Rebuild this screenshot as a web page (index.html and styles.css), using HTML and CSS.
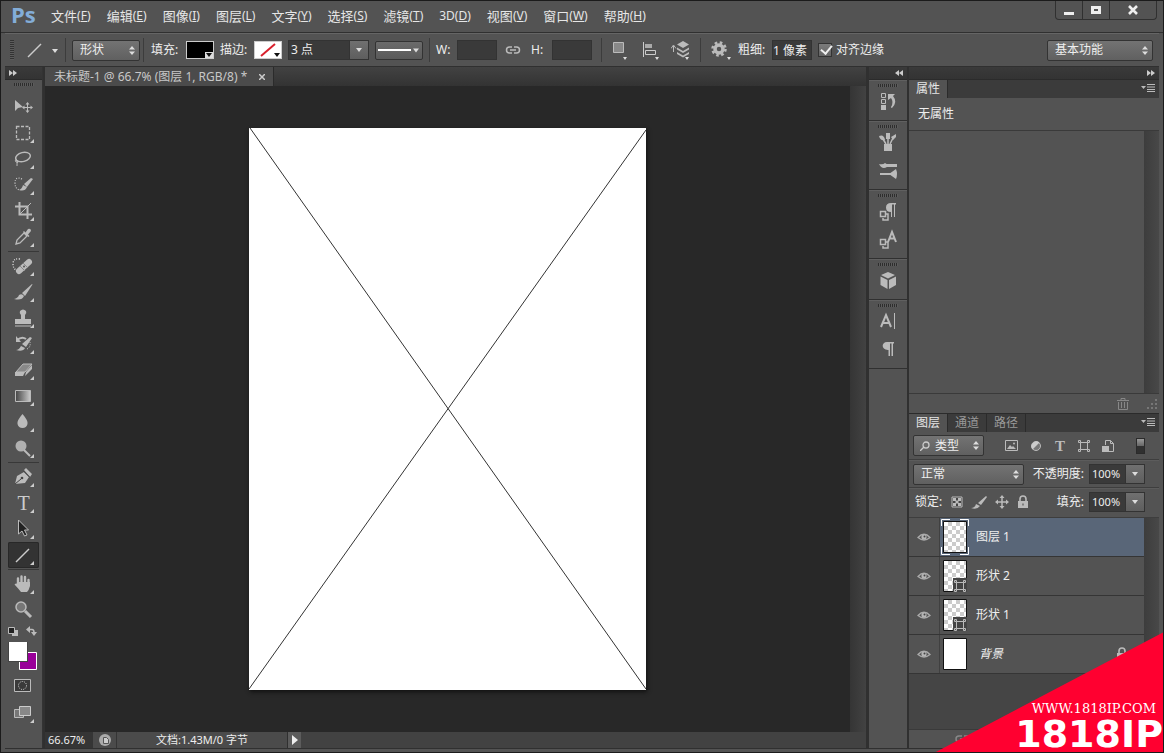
FILE: index.html
```html
<!DOCTYPE html>
<html lang="zh-CN">
<head>
<meta charset="utf-8">
<title>未标题-1 - Ps</title>
<link rel="stylesheet" href="styles.css">
</head>
<body>
<svg class="defs" aria-hidden="true">
  <defs>
    <linearGradient id="grad-tool"><stop offset="0" stop-color="#444"/><stop offset="1" stop-color="#ccc"/></linearGradient>
    <pattern id="checker" width="8" height="8" patternUnits="userSpaceOnUse"><path fill="#fff" d="M0 0h8v8H0z"/><path fill="#ccc" d="M4 0h4v4H4zM0 4h4v4H0z"/></pattern>
    <symbol id="caret" viewBox="0 0 6 4"><path d="M0 0h6L3 4z" fill="#ddd"/></symbol>
    <symbol id="updown" viewBox="0 0 6 9"><path d="M3 0l3 3.500H0zM3 9l3-3.500H0z" fill="#ddd"/></symbol>
    <symbol id="panel-menu" viewBox="0 0 14 8"><path d="M0 2h5L2.500 5z" fill="#bbb"/><path d="M6 .5h8M6 3h8M6 5.500h8M6 7.500h8" stroke="#bbb"/></symbol>
    <symbol id="eye" viewBox="0 0 14 10"><path d="M1 5.500Q7-1 13 5.500Q7 10.500 1 5.500z" fill="none" stroke="#aaa" stroke-width="1.300"/><circle cx="7" cy="5" r="2.600" fill="#b5b5b5"/><circle cx="7.500" cy="4.500" r="1" fill="#444"/></symbol>
    <symbol id="bounds" viewBox="0 0 14 14"><path d="M3 3.500h8M3 10.500h8M3.500 3v8M10.500 3v8" stroke="#bbb" fill="none"/><path d="M1.500 1.500h2v2h-2zM10.500 1.500h2v2h-2zM1.500 10.500h2v2h-2zM10.500 10.500h2v2h-2z" fill="#555" stroke="#bbb"/></symbol>
    <symbol id="lock" viewBox="0 0 12 14"><path d="M3 6V4a3 3 0 016 0v2" fill="none" stroke="#bbb" stroke-width="1.600"/><path d="M1 6h10v7H1z" fill="#bbb"/><path d="M5.500 8.500h1v2h-1z" fill="#444"/></symbol>
    <symbol id="pilcrow" viewBox="0 0 12 14"><path d="M12 0v1.500h-1V14H9.500V1.500H8V14H6.500V8C-1 8.500-1 0 5 0z" fill="#bbb"/></symbol>
  </defs>
</svg>
<div class="app">
  <header class="titlebar">
    <div class="logo">Ps</div>
    <nav class="menu">
      <button>文件<span>(<u>F</u>)</span></button>
      <button>编辑<span>(<u>E</u>)</span></button>
      <button>图像<span>(<u>I</u>)</span></button>
      <button>图层<span>(<u>L</u>)</span></button>
      <button>文字<span>(<u>Y</u>)</span></button>
      <button>选择<span>(<u>S</u>)</span></button>
      <button>滤镜<span>(<u>T</u>)</span></button>
      <button><span>3D(<u>D</u>)</span></button>
      <button>视图<span>(<u>V</u>)</span></button>
      <button>窗口<span>(<u>W</u>)</span></button>
      <button>帮助<span>(<u>H</u>)</span></button>
    </nav>
    <div class="window-buttons">
      <button aria-label="最小化"><svg width="12" height="10"><path d="M1 7h10v3H1z" fill="#eee"/></svg></button>
      <button aria-label="最大化"><svg width="12" height="10"><path d="M2.500 2.500h7v5h-7z" fill="none" stroke="#eee" stroke-width="3"/></svg></button>
      <button class="close" aria-label="关闭"><svg width="12" height="10"><path d="M2 1l8 8M10 1L2 9" stroke="#eee" stroke-width="2.600"/></svg></button>
    </div>
  </header>

  <div class="options">
    <span class="grip-v"></span>
    <button class="opt-icon tool-preset" aria-label="直线工具预设"><svg width="32" height="16"><path d="M1 15L14 2" stroke="#ccc" stroke-width="1.500"/><path d="M25 7h6l-3 4z" fill="#ddd"/></svg></button>
    <span class="sep"></span>
    <span class="select mode"><select aria-label="工具模式"><option>形状</option></select><svg width="6" height="9"><use href="#updown"/></svg></span>
    <span class="sep"></span>
    <span class="label fill-label">填充:</span>
    <button class="swatch" aria-label="填充"><svg width="26" height="16"><path d="M0 0h26v16H0z" fill="#000"/><path d="M18 10h8v6h-8z" fill="#ddd"/><path d="M19 11h6l-3 4z" fill="#111"/></svg></button>
    <span class="label">描边:</span>
    <button class="swatch" aria-label="描边"><svg width="26" height="16"><path d="M0 0h26v16H0z" fill="#fff"/><path d="M6 14L20 2" stroke="#d8202c" stroke-width="2"/><path d="M19 11h6l-3 4z" fill="#111"/></svg></button>
    <span class="combo stroke-width"><input type="text" value="3 点" aria-label="描边宽度"><button aria-label="选择宽度"><svg width="6" height="4"><use href="#caret"/></svg></button></span>
    <button class="line-style" aria-label="描边类型"><svg width="42" height="8"><path d="M0 4h33" stroke="#fff" stroke-width="2"/><path d="M35 2.500h6l-3 4z" fill="#ddd"/></svg></button>
    <span class="sep"></span>
    <label class="label short" for="w">W:</label><input class="field" id="w" type="text">
    <button class="opt-icon link" aria-label="链接"><svg width="16" height="10"><path d="M7 2H4.500a3 3 0 000 6H7M9 2h2.500a3 3 0 010 6H9M5 5h6" fill="none" stroke="#bbb" stroke-width="1.500"/></svg></button>
    <label class="label short" for="h">H:</label><input class="field" id="h" type="text">
    <span class="sep wide"></span>
    <button class="opt-icon" aria-label="路径操作"><svg width="20" height="20"><path d="M2.500 2.500h10v10h-10z" fill="#888" stroke="#bbb"/><path d="M12 17h4l-2 3z" fill="#ddd"/></svg></button>
    <button class="opt-icon" aria-label="路径对齐"><svg width="20" height="20"><path d="M2.500 2v15" stroke="#ccc"/><path d="M4 4h7v4H4z" fill="#aaa"/><path d="M4.500 10.500h10v4h-10z" fill="none" stroke="#ccc"/><path d="M14 17h4l-2 3z" fill="#ddd"/></svg></button>
    <button class="opt-icon" aria-label="路径排列"><svg width="20" height="20"><path d="M6 4.500l6-3.500 6 3.500-6 3.500zM6 7.500l6 3.500 6-3.500v2L12 13 6 9.500zM6 12l6 3.500 6-3.500v2l-6 3.500L6 14z" fill="#bbb"/><path d="M2.500 6v6M0 8.500L2.500 5 5 8.500" fill="none" stroke="#bbb"/><path d="M14 17h4l-2 3z" fill="#ddd"/></svg></button>
    <span class="sep wide"></span>
    <button class="opt-icon gear" aria-label="设置"><svg width="22" height="20"><circle cx="9" cy="9" r="4" fill="none" stroke="#bbb" stroke-width="3.500"/><circle cx="9" cy="9" r="6.500" fill="none" stroke="#bbb" stroke-width="2.500" stroke-dasharray="2.600 2.500"/><path d="M17 17h4l-2 3z" fill="#ddd"/></svg></button>
    <label class="label" for="weight">粗细:</label><input class="field" id="weight" type="text" value="1 像素">
    <label class="check"><input type="checkbox" checked>对齐边缘</label>
    <span class="select workspace-select"><select aria-label="工作区"><option>基本功能</option></select><svg width="6" height="9"><use href="#updown"/></svg></span>
  </div>

  <div class="workspace">
    <aside class="toolbox">
      <button class="strip" aria-label="展开工具"><svg width="8" height="6"><path d="M0 0l4 3-4 3zM4 0l4 3-4 3z" fill="#ccc"/></svg></button>
      <span class="grip"></span>
      <div class="tools">
        <button class="nosub" aria-label="移动"><svg viewBox="0 0 30 26"><path d="M7 6v11l3-3 5-1z" fill="#bbb"/><path d="M19.500 9v9M15 13.500h9" stroke="#bbb"/><path d="M17.500 10.500l2-2.500 2 2.500zM17.500 16.500l2 2.500 2-2.500zM16.500 11.500l-2.500 2 2.500 2zM22.500 11.500l2.500 2-2.500 2z" fill="#bbb"/></svg></button>
        <button aria-label="矩形选框"><svg viewBox="0 0 30 26"><path d="M8.500 6.500h13v13h-13z" fill="none" stroke="#bbb" stroke-width="1.300" stroke-dasharray="3 1.500"/></svg></button>
        <button aria-label="套索"><svg viewBox="0 0 30 26"><ellipse cx="15" cy="11" rx="7.500" ry="4.500" transform="rotate(-14 15 11)" fill="none" stroke="#bbb" stroke-width="1.500"/><path d="M9 13q-3 1-1 3 3 1 2-1t-1 5" fill="none" stroke="#bbb"/></svg></button>
        <button aria-label="快速选择"><svg viewBox="0 0 30 26"><path d="M14 7q-7-3-7 4 0 6 5 7" fill="none" stroke="#ccc" stroke-width="1.200" stroke-dasharray="1 1.500"/><path d="M11 18q3-1 4-5l4 2q-2 5-8 3zM16 12l7-6 2 1-6 8z" fill="#bbb"/></svg></button>
        <button aria-label="裁剪"><svg viewBox="0 0 30 26"><path d="M11.500 4v12.500H24M7 8.500h12.500V21" fill="none" stroke="#bbb" stroke-width="2"/><path d="M12 16L23 5" stroke="#bbb"/></svg></button>
        <button aria-label="吸管"><svg viewBox="0 0 30 26"><path d="M8 20l1-4 7-7 3 3-7 7z" fill="none" stroke="#bbb" stroke-width="1.300"/><path d="M15 8l1-1 1.500 1.500L20 5q3-1 3 2l-3 3.500L21.500 12l-1 1z" fill="#bbb"/></svg></button>
      </div>
      <hr>
      <div class="tools">
        <button aria-label="修复画笔"><svg viewBox="0 0 30 26"><path d="M12 6q-7-1-7 5 0 4 3 6" fill="none" stroke="#ddd" stroke-width="1.300" stroke-dasharray="1 1.500"/><path d="M11 18L21 9" stroke="#bbb" stroke-width="6" stroke-linecap="round"/><path d="M12 13l5 5M15 10l5 5" stroke="#888"/><circle cx="16" cy="13.500" r="1" fill="#555"/></svg></button>
        <button aria-label="画笔"><svg viewBox="0 0 30 26"><path d="M6 20q4-1 5-4 3-2 5 1-2 5-10 3zM14 14L24 5l.5.500L17 17z" fill="#bbb"/></svg></button>
        <button aria-label="仿制图章"><svg viewBox="0 0 30 26"><path d="M12 6q3-3 6 0 1 2-1 4v4h6v5H7v-5h6v-4q-2-2-1-4zM7 20.500h16v1H7z" fill="#bbb"/></svg></button>
        <button aria-label="历史记录画笔"><svg viewBox="0 0 30 26"><path d="M9 9q5-4 9-1" fill="none" stroke="#bbb" stroke-width="2"/><path d="M8 5v6h5zM8 19q3 0 5-4l4 2q-2 4-9 2zM14 13l8-7 2 1-6 9z" fill="#bbb"/><path d="M19 18q4-2 3-7" fill="none" stroke="#ddd" stroke-dasharray="1 1.500"/></svg></button>
        <button aria-label="橡皮擦"><svg viewBox="0 0 30 26"><path d="M8 15l7-8h9l-7 8z" fill="#888" stroke="#bbb"/><path d="M7 15h10l-2 4H7zM18 15l6-7v4l-7 7z" fill="#bbb"/></svg></button>
        <button aria-label="渐变"><svg viewBox="0 0 30 26"><path d="M7.500 7.500h15v11h-15z" fill="url(#grad-tool)" stroke="#bbb"/></svg></button>
        <button aria-label="模糊"><svg viewBox="0 0 30 26"><path d="M14.500 5q6 7 5 10-1 4-5 4t-5-4q-1-3 5-10z" fill="#bbb"/></svg></button>
        <button aria-label="减淡"><svg viewBox="0 0 30 26"><circle cx="13" cy="11" r="5.500" fill="#b0b0b0"/><path d="M16 15l6 6" stroke="#bbb" stroke-width="2"/></svg></button>
      </div>
      <hr>
      <div class="tools">
        <button aria-label="钢笔"><svg viewBox="0 0 30 26"><path d="M7 20l2-8 7-4 5 5-4 6zM16 6l2-2 6 6-2 3z" fill="#bbb"/><path d="M7 20l6-5M15.500 7l6 6" stroke="#444"/><circle cx="14" cy="14" r="1.300" fill="#444"/></svg></button>
        <button class="type-tool" aria-label="横排文字"><span>T</span></button>
        <button aria-label="路径选择"><svg viewBox="0 0 30 26"><path d="M10.500 4v14l3.500-3 2.500 5 2.500-1-2.500-5h4z" fill="#222" stroke="#bbb"/></svg></button>
        <button class="active" aria-label="直线"><svg viewBox="0 0 30 26"><path d="M8 20L21 7" stroke="#ccc" stroke-width="1.400"/></svg></button>
      </div>
      <hr>
      <div class="tools">
        <button aria-label="抓手"><svg viewBox="0 0 30 26"><path d="M10 15V7.500M13.500 13V5.500M17 13V6M20.500 14V9" stroke="#bbb" stroke-width="2.400" stroke-linecap="round"/><path d="M9 11h13v4q-1 4-3 6h-6q-4-5-6.500-7.500 2-2 4 .5z" fill="#bbb"/></svg></button>
        <button class="nosub" aria-label="缩放"><svg viewBox="0 0 30 26"><circle cx="13" cy="10" r="5" fill="#777" stroke="#bbb" stroke-width="1.500"/><path d="M17 14l6 6" stroke="#bbb" stroke-width="3"/></svg></button>
      </div>
      <div class="colors">
        <svg width="31" height="49" viewBox="0 0 31 49"><path d="M4 7h6v6H4z" fill="#bbb"/><path d="M.5 4.500h6v6h-6z" fill="#222" stroke="#bbb"/><path d="M20 6.500h4q2 0 2 3" fill="none" stroke="#bbb" stroke-width="1.500"/><path d="M22 3v7l-4-3.500zM23 9h6l-3 4z" fill="#bbb"/><path d="M11.500 29.500h17v17h-17z" fill="#909" stroke="#fff"/><path d="M0 19h20v20H0z" fill="#444"/><path d="M1 19h18v19H1z" fill="#fff"/></svg>
      </div>
      <div class="tools modes">
        <button class="nosub" aria-label="快速蒙版"><svg viewBox="0 0 30 26"><path d="M6.500 7.500h16v12h-16z" fill="#3a3a3a" stroke="#bbb"/><circle cx="14.500" cy="13.500" r="4" fill="none" stroke="#ddd" stroke-dasharray="1 1.200"/></svg></button>
        <button aria-label="屏幕模式"><svg viewBox="0 0 30 26"><path d="M6.500 9.500h9v8h-9z" fill="#777" stroke="#bbb"/><path d="M11.500 6.500h11v9h-11z" fill="#888" stroke="#ccc"/></svg></button>
      </div>
    </aside>

    <main class="document">
      <div class="doc-tabs"><div class="doc-tab">未标题-1 @ 66.7% (图层 1, RGB/8) *<button aria-label="关闭文档"><svg width="6" height="6"><path d="M0 0l6 6M6 0L0 6" stroke="#ccc" stroke-width="1.500"/></svg></button></div></div>
      <div class="doc-body">
        <div class="canvas">
          <svg class="paper" viewBox="0 0 397 562"><path d="M1 0L397 561M397 2L0 561" stroke="#333" fill="none"/></svg>
        </div>
        <div class="scroll"></div>
      </div>
      <footer class="status">
        <span class="zoom">66.67%</span>
        <span class="status-icon"><svg width="12" height="12"><circle cx="6" cy="6" r="6" fill="#aaa"/><path d="M4.500 3.500h3l2 2v4h-5z" fill="#ccc" stroke="#555"/></svg></span>
        <span class="doc-size">文档:1.43M/0 字节</span>
        <button aria-label="状态菜单"><svg width="8" height="10"><path d="M1 0l6 5-6 5z" fill="#eee"/></svg></button>
        <span class="hscroll"></span>
      </footer>
    </main>

    <aside class="dock">
      <button class="strip end" aria-label="展开面板"><svg width="8" height="6"><path d="M4 0L0 3l4 3zM8 0L4 3l4 3z" fill="#ccc"/></svg></button>
      <div class="dock-group"><span class="grip"></span>
        <button aria-label="历史记录"><svg width="20" height="20"><path d="M3.500 2.500h4v4h-4zM3.500 8.500h4v4h-4z" fill="none" stroke="#bbb"/><path d="M3 14h5v5H3zM10 3h7l-2 2q5 6-1 12-1 0-1-1 3-5 0-9l-3 2z" fill="#bbb"/></svg></button></div>
      <div class="dock-group"><span class="grip"></span>
        <button aria-label="画笔预设"><svg width="20" height="20"><path d="M6 12h8v7H6z" fill="#bbb"/><path d="M8 12L5 7M10 12V5M12 12l3-6" stroke="#bbb" stroke-width="1.500"/><path d="M1 4q5-2 6 4-5 1-6-4zM8 1h4v6H8zM13 5l5-3v3l-3 3z" fill="#bbb"/></svg></button>
        <button aria-label="画笔"><svg width="20" height="20"><path d="M8 4h11v3H8zM2 13h11v2H2z" fill="#bbb"/><path d="M1 4q4 1 6-1 4 2 2 4-5 3-8-3zM11 14l7-5q2 5 0 10z" fill="#bbb"/></svg></button></div>
      <div class="dock-group"><span class="grip"></span>
        <button aria-label="段落样式"><svg width="20" height="20"><path d="M18 2v1.500h-1V16h-1V3.500h-2V16h-1v-5q-5 0-5-4.500T13 2z" fill="#bbb"/><path d="M2.500 10.500h5v5h-5z" fill="none" stroke="#bbb" stroke-width="1.500"/><path d="M5 17v2h5v-6H8" fill="none" stroke="#bbb" stroke-width="1.500"/></svg></button>
        <button aria-label="字符样式"><svg width="20" height="20"><path d="M2.500 10.500h5v5h-5zM5 17v2h5v-6H8" fill="none" stroke="#bbb" stroke-width="1.500"/><path d="M10 13l4-10 4 10M12 9.500h5" fill="none" stroke="#bbb" stroke-width="2"/></svg></button></div>
      <div class="dock-group"><span class="grip"></span>
        <button aria-label="3D"><svg width="20" height="20"><path d="M10 2l7 3-7 3.500L3 5zM2.500 6.500L9.500 10v9l-7-4zM18 6.500L11 10v9l7-4z" fill="#bbb"/></svg></button></div>
      <div class="dock-group"><span class="grip"></span>
        <button aria-label="字符"><svg width="20" height="20"><path d="M3 16L8 4l5 12M5 12h6" fill="none" stroke="#bbb" stroke-width="2"/><path d="M16.500 2v16" stroke="#bbb"/></svg></button>
        <button aria-label="段落"><svg width="12" height="14"><use href="#pilcrow"/></svg></button></div>
    </aside>

    <aside class="panels">
      <button class="strip end" aria-label="折叠面板"><svg width="8" height="6"><path d="M0 0l4 3-4 3zM4 0l4 3-4 3z" fill="#ccc"/></svg></button>
      <section class="properties">
        <div class="tabs"><button class="tab on">属性</button><svg class="tabs-menu" width="14" height="8"><use href="#panel-menu"/></svg></div>
        <div class="prop-title">无属性</div>
        <div class="prop-body"><div class="prop-main"></div><div class="scroll slim"></div></div>
        <div class="prop-footer"><svg width="12" height="12"><path d="M0 2.500h12M4 2V.5h4V2" fill="none" stroke="#888"/><path d="M1.500 4v7.500h9V4M4.500 4v6M7.500 4v6" fill="none" stroke="#888"/></svg><svg width="10" height="10"><path d="M8 0h2v2H8zM8 4h2v2H8zM4 4h2v2H4zM8 8h2v2H8zM4 8h2v2H4zM0 8h2v2H0z" fill="#777"/></svg></div>
      </section>
      <section class="layers">
        <div class="tabs"><button class="tab on">图层</button><button class="tab">通道</button><button class="tab">路径</button><svg class="tabs-menu" width="14" height="8"><use href="#panel-menu"/></svg></div>
        <div class="row filter">
          <span class="select kind"><svg class="search" width="10" height="10"><circle cx="6" cy="4" r="3" fill="none" stroke="#ccc" stroke-width="1.300"/><path d="M4 6L0 10" stroke="#ccc" stroke-width="1.300"/></svg><select aria-label="筛选类型"><option>类型</option></select><svg width="6" height="9"><use href="#updown"/></svg></span>
          <span class="filters">
            <button aria-label="像素"><svg width="14" height="14"><path d="M.5 1.500h12v10H.5z" fill="none" stroke="#bbb"/><path d="M2 10l3-4 2 2 1-1 3 3z" fill="#bbb"/><circle cx="9" cy="4.500" r="1" fill="#bbb"/></svg></button>
            <button aria-label="调整"><svg width="14" height="14"><circle cx="7" cy="7" r="4.500" fill="#777" stroke="#bbb"/><path d="M3.500 10.500l7-7a5 5 0 00-7 7z" fill="#ccc"/></svg></button>
            <button aria-label="文字" class="t">T</button>
            <button aria-label="形状"><svg width="14" height="14"><use href="#bounds"/></svg></button>
            <button aria-label="智能对象"><svg width="14" height="14"><path d="M4.500 6V1.500h5l3 3v8H8M9.500 1.500v3h3" fill="none" stroke="#bbb"/><path d="M1 7h7v6H1z" fill="#bbb"/></svg></button>
          </span>
          <button class="toggle" aria-label="筛选开关"></button>
        </div>
        <div class="row">
          <span class="select blend"><select aria-label="混合模式"><option>正常</option></select><svg width="6" height="9"><use href="#updown"/></svg></span>
          <label class="label push" for="opacity">不透明度:</label>
          <span class="combo percent"><input id="opacity" type="text" value="100%"><button aria-label="不透明度滑块"><svg width="6" height="4"><use href="#caret"/></svg></button></span>
        </div>
        <div class="row lock-row">
          <span class="label">锁定:</span>
          <span class="locks">
            <button aria-label="锁定透明像素"><svg width="12" height="12"><path d="M1 1h10v10H1z" fill="#444" stroke="#bbb"/><path d="M2 2h3v3H2zM7 2h3v3H7zM4.500 4.500h3v3h-3zM2 7h3v3H2zM7 7h3v3H7z" fill="#bbb"/></svg></button>
            <button aria-label="锁定图像像素"><svg width="16" height="14"><path d="M0 13q4 0 5-4l4 2q-3 4-9 2zM7 8l8-7 1 1-6 8z" fill="#bbb"/></svg></button>
            <button aria-label="锁定位置"><svg width="14" height="14"><path d="M7 2v10M2 7h10" stroke="#bbb" stroke-width="1.500"/><path d="M4.500 3L7 0l2.500 3zM4.500 11L7 14l2.500-3zM3 4.500L0 7l3 2.500zM11 4.500L14 7l-3 2.500z" fill="#bbb"/></svg></button>
            <button aria-label="锁定全部"><svg width="12" height="14"><use href="#lock"/></svg></button>
          </span>
          <label class="label push" for="fill">填充:</label>
          <span class="combo percent"><input id="fill" type="text" value="100%"><button aria-label="填充滑块"><svg width="6" height="4"><use href="#caret"/></svg></button></span>
        </div>
        <div class="layer-body">
          <ul class="layer-list">
            <li class="selected"><button class="eye" aria-label="显示"><svg width="14" height="10"><use href="#eye"/></svg></button><svg class="thumb" viewBox="0 0 30 38"><path d="M3.500 3.500h23v31h-23z" fill="url(#checker)" stroke="#111"/><path d="M1.500 8V1.500H10M20 1.500h8.500V8M28.500 29v7.500H20M10 36.500H1.500V29" fill="none" stroke="#fff"/></svg><span>图层 1</span></li>
            <li><button class="eye" aria-label="显示"><svg width="14" height="10"><use href="#eye"/></svg></button><svg class="thumb" viewBox="0 0 30 38"><path d="M3.500 3.500h23v31h-23z" fill="url(#checker)" stroke="#111"/><path d="M13 21h14v14H13z" fill="#444"/><use href="#bounds" x="13" y="22" width="14" height="14"/></svg><span>形状 2</span></li>
            <li><button class="eye" aria-label="显示"><svg width="14" height="10"><use href="#eye"/></svg></button><svg class="thumb" viewBox="0 0 30 38"><path d="M3.500 3.500h23v31h-23z" fill="url(#checker)" stroke="#111"/><path d="M13 21h14v14H13z" fill="#444"/><use href="#bounds" x="13" y="22" width="14" height="14"/></svg><span>形状 1</span></li>
            <li><button class="eye" aria-label="显示"><svg width="14" height="10"><use href="#eye"/></svg></button><svg class="thumb" viewBox="0 0 30 38"><path d="M3.500 3.500h23v31h-23z" fill="#fff" stroke="#111"/></svg><span class="bg-name">背景</span><svg class="bg-lock" width="12" height="14"><use href="#lock"/></svg></li>
          </ul>
          <div class="scroll slim"></div>
        </div>
        <div class="layer-footer"><svg width="16" height="8"><path d="M7 1H4a3 3 0 000 6h3M9 1h3a3 3 0 010 6H9M5 4h6" fill="none" stroke="#888" stroke-width="1.500"/></svg></div>
      </section>
    </aside>
  </div>

  <div class="watermark"><span class="site">WWW.1818IP.COM</span><span class="brand">1818IP</span></div>
</div>
</body>
</html>
```
FILE: styles.css
```css
* { box-sizing: border-box; }
html, body { height: 100%; }
body {
  margin: 0;
  background: #111;
  color: #eee;
  font: 12px/16px "Noto Sans", "Noto Sans CJK SC", sans-serif;
}
button, input, select { font: inherit; color: inherit; margin: 0; padding: 0; border: 0; background: none; border-radius: 0; }
button { display: flex; align-items: center; justify-content: center; }
svg { display: block; flex: none; }
.defs { position: absolute; width: 0; height: 0; }

.app {
  position: relative;
  display: flex;
  flex-direction: column;
  min-height: 100vh;
  padding-bottom: 3px;
  background: #535353;
  border: 1px solid #1b1b1b;
  overflow: hidden;
}

/* Title bar */
.titlebar { display: flex; height: 32px; flex: none; padding-right: 6px; border-bottom: 1px solid #303030; }
.logo { width: 42px; padding-left: 10px; color: #83add8; font: bold 22px/26px "Open Sans", sans-serif; }
.menu { display: flex; align-items: center; gap: 16px; padding: 0 0 2px 8px; }
.menu button { font-size: 13px; line-height: 18px; color: #e6e6e6; white-space: nowrap; }
.menu span { font-size: 12px; }
.window-buttons { display: flex; margin-left: auto; height: 19px; border: 1px solid #303030; border-top: 0; border-radius: 0 0 4px 4px; }
.window-buttons button { width: 27px; border-right: 1px solid #303030; }
.window-buttons .close { width: 46px; border-right: 0; }

/* Options bar */
.options {
  display: flex;
  align-items: center;
  gap: 6px;
  height: 34px;
  flex: none;
  margin: 0 4px;
  padding: 0 6px 0 5px;
  border-top: 1px solid #656565;
  border-bottom: 1px solid #303030;
  white-space: nowrap;
}
.grip-v { width: 4px; height: 20px; background: repeating-linear-gradient(#333 0 1px, #5c5c5c 1px 2px); }
.tool-preset { width: 32px; margin-left: 7px; }
.sep { width: 1px; height: 24px; background: #3c3c3c; }
.sep.wide { margin: 0 3px; }
.label { width: 28px; white-space: nowrap; }
.label.fill-label { width: 30px; padding-left: 1px; }
.label.short { width: 15px; }
.select { position: relative; display: flex; align-items: center; height: 21px; border: 1px solid #333; border-radius: 2px; background: linear-gradient(#737373, #606060); }
.select select { appearance: none; width: 100%; height: 100%; padding: 0 16px 0 7px; outline: 0; }
.select svg { position: absolute; right: 4px; }
.select .search { position: absolute; left: 6px; right: auto; }
.mode { width: 68px; margin-right: -3px; }
.swatch { width: 28px; height: 18px; border: 1px solid #ccc; }
.combo { display: flex; height: 20px; border: 1px solid #333; background: #3a3a3a; }
.combo input { width: 100%; min-width: 0; padding: 0 2px; }
.combo button { width: 19px; flex: none; background: linear-gradient(#707070, #5e5e5e); border-left: 1px solid #333; }
.stroke-width { width: 81px; }
.line-style { width: 48px; height: 19px; border: 1px solid #333; border-radius: 2px; background: linear-gradient(#6b6b6b, #5a5a5a); }
.field { width: 40px; height: 20px; padding: 0 1px; background: #3a3a3a; box-shadow: inset 0 0 0 1px #333; }
.opt-icon { flex: none; }
.link { width: 20px; margin-right: 2px; }
.options .opt-icon + .opt-icon { margin-left: 4px; }
.check { display: flex; align-items: center; gap: 4px; }
.check input { appearance: none; width: 14px; height: 14px; border: 1px solid #333; background: linear-gradient(#7b7b7b, #656565); position: relative; }
.check input:checked::after { content: ""; position: absolute; left: 4px; top: -1px; width: 5px; height: 9px; border: solid #eee; border-width: 0 2px 2px 0; transform: rotate(40deg); }
.workspace-select { width: 106px; margin-left: auto; }

/* Work area */
.workspace { display: flex; flex: 1; margin: 0 4px; border-bottom: 1px solid #303030; background: #303030; }
.strip { width: 100%; height: 13px; flex: none; justify-content: flex-start; padding: 0 4px; background: linear-gradient(#3a3a3a, #333); border-bottom: 1px solid #2b2b2b; }
.strip.end { justify-content: flex-end; }
.grip { display: block; width: 20px; height: 3px; background: repeating-linear-gradient(90deg, #2d2d2d 0 1px, #5c5c5c 1px 2px); }

.toolbox { display: flex; flex-direction: column; align-items: center; width: 38px; flex: none; background: #535353; border-right: 1px solid #333; }
.toolbox > .grip { margin: 3px 0 8px; }
.toolbox hr { width: 31px; height: 1px; margin: 1px 0; border: 0; background: #383838; }
.tools button { position: relative; width: 31px; height: 26px; justify-content: flex-start; }
.tools svg { width: 30px; height: 26px; }
.tools button::after { content: ""; position: absolute; right: 5px; bottom: 3px; border-style: solid; border-width: 0 0 4px 4px; border-color: transparent transparent #ccc transparent; }
.tools .nosub::after { display: none; }
.tools .active { background: #333; border-radius: 2px; box-shadow: inset 0 0 0 1px #282828; }
.tools .type-tool { justify-content: center; }
.type-tool span { font: 20px/24px "Liberation Serif", serif; color: #ccc; }
.modes { display: grid; gap: 2px; }

.document { display: flex; flex: 1; flex-direction: column; min-width: 0; margin: 0 3px 0 2px; }
.doc-tabs { display: flex; height: 19px; flex: none; background: linear-gradient(#424242, #333); }
.doc-tab { display: flex; align-items: center; gap: 12px; padding: 0 8px 0 9px; background: #4b4b4b; border-right: 1px solid #2b2b2b; color: #c8c8c8; white-space: nowrap; }
.doc-body { display: flex; flex: 1; }
.canvas { display: flex; flex: 1; align-items: center; justify-content: center; background: #282828; }
.paper { width: 397px; height: 562px; background: #fff; box-shadow: 1px 2px 4px #111; }
.scroll { width: 16px; flex: none; background: linear-gradient(90deg, #353535, #424242); }
.scroll.slim { width: 15px; background: linear-gradient(90deg, #3d3d3d, #484848); }
.status { display: flex; height: 16px; flex: none; background: #444; font-size: 11px; }
.zoom { width: 48px; padding-left: 3px; background: #353535; }
.status-icon { display: flex; align-items: center; justify-content: center; width: 24px; border-right: 1px solid #353535; background: #4b4b4b; }
.doc-size { width: 170px; text-align: center; background: #4b4b4b; }
.status button { width: 14px; background: #5c5c5c; border-left: 1px solid #303030; }
.hscroll { flex: 1; background: #424242; }

.dock { width: 38px; flex: none; background: #535353; margin-right: 2px; }
.dock-group { display: grid; justify-items: center; padding: 3px 0 5px; border-bottom: 1px solid #303030; border-top: 1px solid #606060; }
.dock-group button { width: 30px; height: 28px; }

/* Panels */
.panels { display: flex; flex-direction: column; width: 250px; flex: none; background: #535353; }
.properties { display: flex; flex-direction: column; height: 334px; border-bottom: 1px solid #2b2b2b; }
.tabs { display: flex; align-items: stretch; height: 18px; flex: none; padding-right: 4px; background: #3b3b3b; }
.tab { width: 39px; border-right: 1px solid #2b2b2b; color: #999; }
.tab.on { background: #535353; color: #e6e6e6; }
.tabs-menu { margin: 4px 0 0 auto; }
.prop-title { height: 33px; padding: 8px 9px; border-bottom: 1px solid #3a3a3a; }
.prop-body { display: flex; flex: 1; border-bottom: 1px solid #3a3a3a; }
.prop-main { flex: 1; }
.prop-footer { display: flex; align-items: center; justify-content: flex-end; gap: 18px; height: 19px; padding-right: 2px; }
.layers { display: flex; flex: 1; flex-direction: column; }
.row { display: flex; align-items: center; gap: 5px; height: 28px; flex: none; padding: 0 14px 0 4px; border-bottom: 1px solid #3e3e3e; }
.row + .row { border-top: 1px solid #5c5c5c; }
.row.lock-row { height: 30px; padding-bottom: 2px; }
.row .label { width: auto; padding-left: 2px; }
.row .push { margin-left: auto; }
.kind { width: 71px; }
.kind select { padding-left: 21px; }
.blend { width: 111px; }
.percent { width: 56px; }
.percent input { font-size: 11px; }
.filters { display: flex; gap: 10px; margin: 0 auto; }
.filters .t { width: 14px; font: bold 15px/14px "Liberation Serif", serif; color: #bbb; }
.toggle { width: 9px; height: 16px; background: linear-gradient(#999, #666 50%, #303030 50%); border: 1px solid #2b2b2b; }
.locks { display: flex; align-items: center; gap: 8px; padding-left: 4px; }
.layer-body { display: flex; flex: 1; background: #454545; }
.layer-list { flex: 1; margin: 0; padding: 0; list-style: none; }
.layer-list li { display: flex; align-items: center; height: 39px; background: #535353; border-bottom: 1px solid #353535; }
.layer-list .selected { background: linear-gradient(90deg, #535353 30px, #596678 30px); }
.eye { width: 31px; height: 38px; border-right: 1px solid #404040; }
.thumb { width: 30px; height: 38px; margin-right: 6px; }
.bg-name { font-style: italic; padding-left: 3px; }
.bg-lock { margin: 0 16px 0 auto; }
.layer-footer { display: flex; align-items: center; height: 19px; padding-left: 46px; border-top: 1px solid #3a3a3a; }

.watermark {
  position: absolute;
  right: -1px;
  bottom: -1px;
  display: flex;
  flex-direction: column;
  align-items: flex-end;
  justify-content: flex-end;
  width: 230px;
  height: 121px;
  background: #ff0030;
  clip-path: polygon(100% 0, 100% 100%, 0 100%);
  color: #fff;
}
.site { padding-right: 8px; font: 13px/12px "DejaVu Serif", serif; }
.brand { padding-right: 1px; font: bold 38px/38px "DejaVu Sans", sans-serif; }
```
